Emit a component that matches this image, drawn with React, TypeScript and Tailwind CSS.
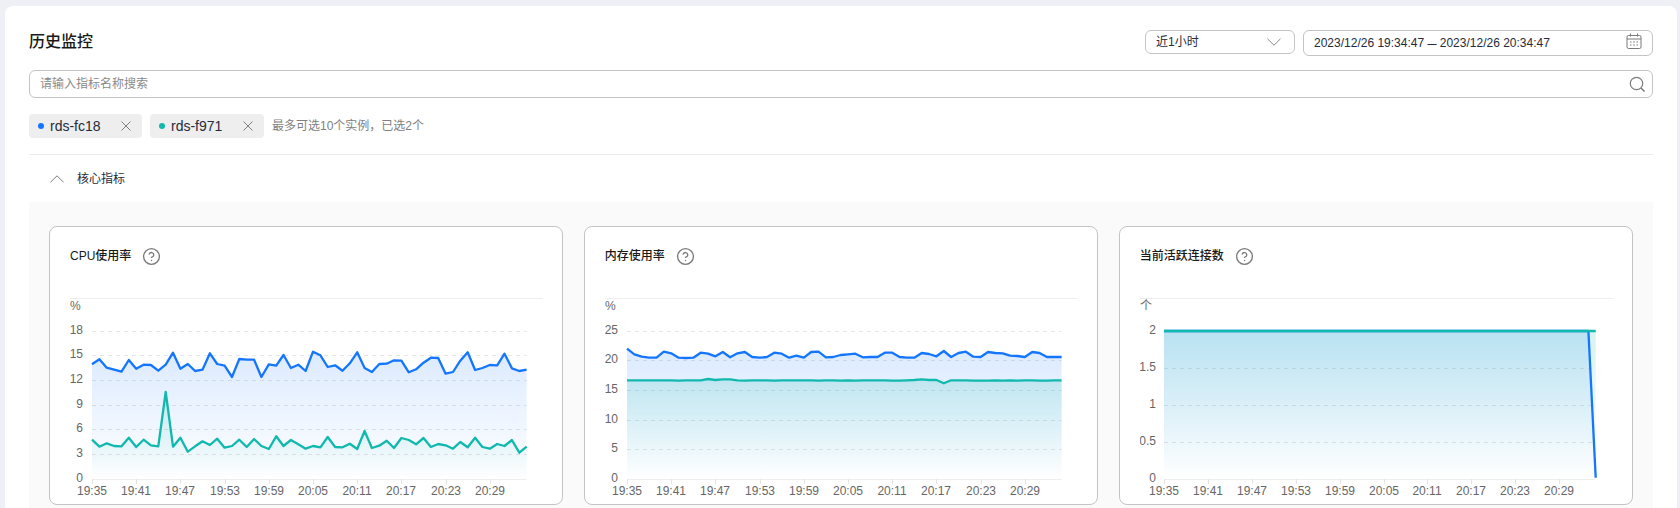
import React from "react";
import { CircleHelp } from "lucide-react";

const BLUE = "#1476ff";
const TEAL = "#10b8ad";
const TIMES = ["19:35", "19:41", "19:47", "19:53", "19:59", "20:05", "20:11", "20:17", "20:23", "20:29"];
const AXIS_Y = 181;

// Values are read from the reference, as y offsets in 1/3 px measured from y=220.
const toY = (z: number) => 220 + z / 3 - 298;

const cpuBlue = [433,418,443,449,455,420,446,434,435,452,434,398,446,432,453,449,400,432,437,471,417,419,419,471,433,437,405,444,434,453,395,406,441,436,452,430,397,444,456,432,431,421,422,457,448,428,413,414,461,456,422,397,450,444,435,436,401,445,453,449];
const cpuTeal = [659,680,670,678,679,653,681,659,676,679,516,680,653,695,679,664,675,656,683,678,659,681,657,678,687,649,678,660,673,686,678,682,651,681,682,671,687,633,684,677,662,684,654,660,673,654,681,672,676,686,666,682,653,681,686,672,678,660,698,680];
const memBlue = [386,403,410,413,413,395,400,413,414,413,398,401,409,396,412,400,396,411,413,411,398,401,413,407,413,396,395,412,411,405,403,401,412,411,411,398,398,411,413,413,399,402,409,393,411,399,395,410,411,396,399,400,407,408,411,396,399,411,411,411];
const memTeal = [481,481,481,481,481,481,481,482,481,481,481,477,480,478,478,481,482,481,481,481,482,481,481,481,481,481,482,481,481,482,481,482,481,481,481,481,482,482,481,480,478,480,480,490,481,481,481,482,482,482,481,482,481,482,481,481,482,482,481,481];
const connBlue = [...Array(59).fill(333), 773];
const connTeal = Array(60).fill(333);

type ChartProps = {
  id: string;
  title: string;
  unit: string;
  left: number;
  labelEnd: number;
  step: number;
  ticks: { label: string; z: number }[];
  blue: number[];
  teal: number[];
};

function Chart({ id, left, labelEnd, step, unit, ticks, blue, teal }: ChartProps) {
  const xAt = (i: number) => left + (step / 6) * i;
  const line = (d: number[]) => d.map((z, i) => `${xAt(i).toFixed(1)},${toY(z).toFixed(1)}`).join(" ");
  const area = (d: number[]) => `${xAt(0)},${AXIS_Y} ${line(d)} ${xAt(59).toFixed(1)},${AXIS_Y}`;
  return (
    <svg className="block h-[206px] w-full text-[12px]" role="img">
      <defs>
        <linearGradient id={`${id}-b`} x1="0" y1="0" x2="0" y2="1">
          <stop offset="0" stopColor={BLUE} stopOpacity="0.15" />
          <stop offset="1" stopColor={BLUE} stopOpacity="0" />
        </linearGradient>
        <linearGradient id={`${id}-t`} x1="0" y1="0" x2="0" y2="1">
          <stop offset="0" stopColor={TEAL} stopOpacity="0.17" />
          <stop offset="1" stopColor={TEAL} stopOpacity="0" />
        </linearGradient>
      </defs>
      <line x1="0" x2="100%" y1="0.5" y2="0.5" stroke="#eeeeee" />
      <text x="0" y="12" fill="#666666">{unit}</text>
      {ticks.map((t) => {
        const y = Math.round(toY(t.z)) + 0.5;
        return (
          <g key={t.label}>
            {t.label !== "0" && (
              <line x1={xAt(0)} x2={xAt(59)} y1={y} y2={y} stroke="#e6e6e6" strokeDasharray="4 4" />
            )}
            <text x={labelEnd} y={y + 2} textAnchor="end" fill="#666666">{t.label}</text>
          </g>
        );
      })}
      <polygon points={area(blue)} fill={`url(#${id}-b)`} />
      <polygon points={area(teal)} fill={`url(#${id}-t)`} />
      <line x1={xAt(0)} x2={xAt(59)} y1={AXIS_Y + 0.5} y2={AXIS_Y + 0.5} stroke="#eeeeee" />
      {TIMES.map((t, i) => {
        const x = Math.round(left + step * i);
        return (
          <g key={t}>
            <line x1={x + 0.5} x2={x + 0.5} y1={AXIS_Y} y2={AXIS_Y + 5} stroke="#e3e3e3" />
            <text x={x} y={197} textAnchor="middle" fill="#666666">{t}</text>
          </g>
        );
      })}
      <polyline points={line(blue)} fill="none" stroke={BLUE} strokeWidth="2.3" strokeLinejoin="round" />
      <polyline points={line(teal)} fill="none" stroke={TEAL} strokeWidth="2.3" strokeLinejoin="round" />
    </svg>
  );
}

const charts: ChartProps[] = [
  {
    id: "cpu", title: "CPU使用率", unit: "%", left: 22, labelEnd: 13, step: 44.2, blue: cpuBlue, teal: cpuTeal,
    ticks: [{ label: "18", z: 334 }, { label: "15", z: 406 }, { label: "12", z: 481 }, { label: "9", z: 556 }, { label: "6", z: 628 }, { label: "3", z: 703 }, { label: "0", z: 778 }],
  },
  {
    id: "mem", title: "内存使用率", unit: "%", left: 22, labelEnd: 13, step: 44.2, blue: memBlue, teal: memTeal,
    ticks: [{ label: "25", z: 334 }, { label: "20", z: 421 }, { label: "15", z: 511 }, { label: "10", z: 601 }, { label: "5", z: 688 }, { label: "0", z: 778 }],
  },
  {
    id: "conn", title: "当前活跃连接数", unit: "个", left: 24, labelEnd: 16, step: 43.9, blue: connBlue, teal: connTeal,
    ticks: [{ label: "2", z: 333 }, { label: "1.5", z: 445 }, { label: "1", z: 556 }, { label: "0.5", z: 667 }, { label: "0", z: 778 }],
  },
];

function Tag({ name, color, width }: { name: string; color: string; width: string }) {
  return (
    <div className={`flex h-6 items-center rounded bg-[#eeeeee] pl-[9px] pr-[11px] text-sm text-[#252b3a] ${width}`}>
      <span className={`h-[6px] w-[6px] rounded-full ${color}`} />
      <span className="ml-[6px] flex-1">{name}</span>
      <svg width="10" height="10" viewBox="0 0 10 10" fill="none" stroke="#7f7f7f" strokeWidth="1">
        <path d="M0.5 0.5 9.5 9.5M9.5 0.5 0.5 9.5" />
      </svg>
    </div>
  );
}

export default function App() {
  return (
    <div className="h-[508px] w-[1680px] overflow-hidden bg-[#eef0f5] pl-[5px] pr-[3px] pt-[6px] font-['Liberation_Sans','Noto_Sans_CJK_SC',sans-serif]">
      <div className="h-[600px] rounded-t-lg bg-white px-6 pt-[24px]">
        <div className="flex items-start justify-between">
          <h1 className="text-base leading-[23px] font-medium text-[#191919]">历史监控</h1>
          <div className="flex items-start gap-2">
            <div className="flex h-6 w-[150px] items-center justify-between rounded-md border border-[#c4c4c4] pl-[10px] pr-[13px] text-xs text-[#252b3a]">
              <span>近1小时</span>
              <svg width="14" height="8" viewBox="0 0 14 8" fill="none" stroke="#8a8a8a" strokeWidth="1">
                <path d="M0.5 0.8 7 7.2 13.5 0.8" />
              </svg>
            </div>
            <div className="flex h-[26px] w-[350px] items-center justify-between rounded-md border border-[#c4c4c4] pl-[10px] pr-[10px] text-xs text-[#252b3a]">
              <span>2023/12/26 19:34:47 <span className="text-[9px] font-bold">—</span> 2023/12/26 20:34:47</span>
              <svg width="16" height="17" viewBox="0 0 16 17" fill="none" stroke="#7a7a7a" strokeWidth="1" className="mt-[-3px]">
                <rect x="1" y="2.5" width="14" height="13" rx="1.5" />
                <path d="M1 6H15M4.5 0.5V3.5M11.5 0.5V3.5" />
                <path d="M4 9H5.5M7.2 9H8.8M10.5 9H12M4 12H5.5M7.2 12H8.8M10.5 12H12" strokeWidth="1.2" />
              </svg>
            </div>
          </div>
        </div>
        <div className="mt-[14px] flex h-[28px] items-center rounded-md border border-[#c4c4c4] pl-[10px] pr-[6px]">
          <input
            readOnly
            placeholder="请输入指标名称搜索"
            className="flex-1 bg-transparent text-xs outline-none placeholder:text-[#8a8a8a]"
          />
          <svg width="17" height="17" viewBox="0 0 17 17" fill="none" stroke="#7a7a7a" strokeWidth="1.2">
            <circle cx="7.5" cy="7.5" r="6.2" />
            <path d="M12 12 15.5 15.5" strokeWidth="1.5" />
          </svg>
        </div>
        <div className="mt-4 flex items-center gap-2">
          <Tag name="rds-fc18" color="bg-[#1476ff]" width="w-[113px]" />
          <Tag name="rds-f971" color="bg-[#10b8ad]" width="w-[114px]" />
          <span className="text-xs text-[#808080]">最多可选10个实例，已选2个</span>
        </div>
        <div className="mt-4 flex h-[48px] items-center gap-[13px] border-t border-[#ececec] pl-[21px]">
          <svg width="14" height="8" viewBox="0 0 14 8" fill="none" stroke="#7a7a7a" strokeWidth="1">
            <path d="M0.5 7.2 7 0.8 13.5 7.2" />
          </svg>
          <span className="text-xs text-[#252b3a]">核心指标</span>
        </div>
        <div className="h-[320px] bg-[#fafafa] px-5 pt-[24px]">
          <div className="grid grid-cols-3 gap-[20.5px]">
            {charts.map((c) => (
              <div key={c.id} className="h-[279px] rounded-lg border border-[#c4c4c4] bg-white pl-5 pr-[19px] pt-[17px]">
                <div className="flex h-6 items-center gap-[11px]">
                  <span className="text-xs font-medium text-[#191919]">{c.title}</span>
                  <CircleHelp size={19} strokeWidth={1.7} color="#7a7a7a" className="mt-[1px]" />
                </div>
                <div className="mt-[30px]">
                  <Chart {...c} />
                </div>
              </div>
            ))}
          </div>
        </div>
      </div>
    </div>
  );
}
